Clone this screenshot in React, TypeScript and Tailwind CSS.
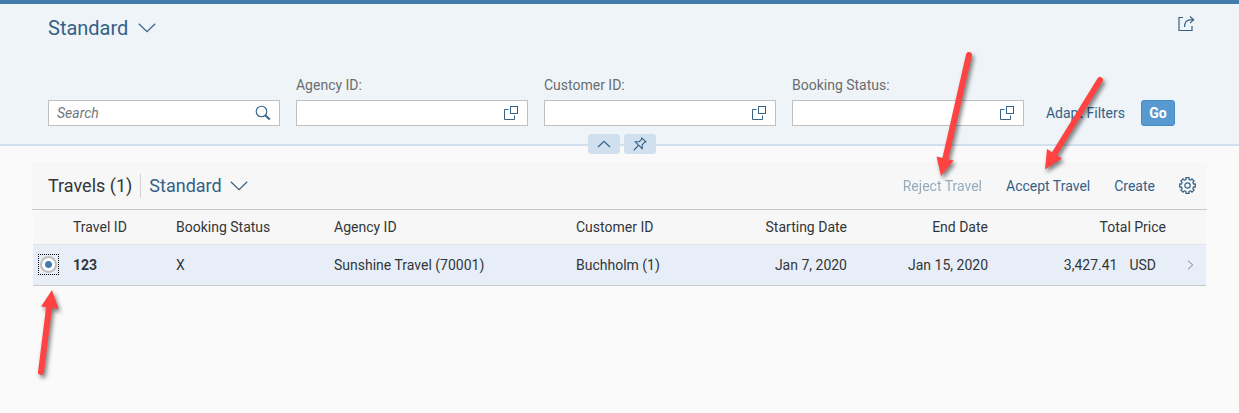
import React from "react";

function ChevronDown() {
  return (
    <svg width="18" height="10" viewBox="0 0 18 10" fill="none" stroke="#346187" strokeWidth="1.2" aria-hidden="true">
      <path d="M.8.8 9 8.7 17.2.8" />
    </svg>
  );
}

function ValueHelpIcon() {
  return (
    <svg width="16" height="16" viewBox="0 0 16 16" fill="none" stroke="#346187" aria-hidden="true">
      <path d="M5.5 4.5h-4v10h10v-4" />
      <rect x="7.5" y="1.5" width="7" height="7" />
    </svg>
  );
}

function SearchIcon() {
  return (
    <svg width="16" height="16" viewBox="0 0 16 16" fill="none" stroke="#346187" aria-hidden="true">
      <circle cx="6.5" cy="6.5" r="5.3" strokeWidth="1.1" />
      <path d="m10.2 10.2 4.6 4.3" strokeWidth="1.9" />
    </svg>
  );
}

function ShareIcon() {
  return (
    <svg width="18" height="16" viewBox="0 0 18 16" fill="none" stroke="#346187" strokeWidth="1.2" aria-hidden="true">
      <path d="M6 1.5H2v13h13v-4.500" />
      <path d="M7.5 11C7.500 6.500 9.800 3.800 13 3.800h3.600" />
      <path d="m13 .5 3.600 3.300L13 7.100" />
    </svg>
  );
}

function PinIcon() {
  return (
    <svg width="14" height="14" viewBox="0 0 14 14" fill="none" stroke="#346187" strokeWidth="1.1" strokeLinejoin="round" aria-hidden="true">
      <path d="M8.700.8 13 5l-1.500.3-2.400 2.600.2 4L2 4.700l4.200.1 2.300-2.500z" />
      <path d="M5.300 8.500.7 13.300" />
    </svg>
  );
}

function GearIcon() {
  const teeth = 8;
  const points: string[] = [];
  for (let i = 0; i < teeth; i++) {
    const parts: [number, number][] = [[-0.24, 6.2], [-0.21, 8], [0.21, 8], [0.24, 6.2]];
    parts.forEach(([offset, radius]) => {
      const angle = (i / teeth) * Math.PI * 2 + offset;
      points.push(`${(8.5 + Math.sin(angle) * radius).toFixed(2)},${(8.5 - Math.cos(angle) * radius).toFixed(2)}`);
    });
  }
  return (
    <svg width="17" height="17" viewBox="0 0 17 17" fill="none" stroke="#346187" strokeWidth="1.2" strokeLinejoin="round" aria-hidden="true">
      <polygon points={points.join(" ")} />
      <circle cx="8.5" cy="8.5" r="2.7" />
    </svg>
  );
}

function FilterField({ id, label }: { id: string; label: string }) {
  return (
    <div className="min-w-0 flex-1">
      <label htmlFor={id} className="mb-[5px] block h-5 whitespace-nowrap leading-5 text-[#6a6d70]">
        {label}
      </label>
      <div className="flex h-[26px] items-center border border-[#bfbfbf] bg-white pr-2">
        <input id={id} type="text" className="h-full min-w-0 flex-1 bg-transparent px-2 outline-none" />
        <button type="button" aria-label={`Select ${label}`}>
          <ValueHelpIcon />
        </button>
      </div>
    </div>
  );
}

function Arrows() {
  return (
    <svg
      width="1120"
      height="400"
      viewBox="0 0 1120 400"
      className="pointer-events-none absolute left-0 top-0 drop-shadow-[2px_3px_2px_rgba(0,0,0,0.5)]"
      fill="#ff4343"
      stroke="#ff4343"
      aria-hidden="true"
    >
      <g strokeWidth="6" strokeLinecap="round">
        <path d="M969 55 945.5 158" />
        <path d="M1100 80 1055 153" />
        <path d="M41 372 49 308" />
      </g>
      <g stroke="none">
        <path d="M941 176 936.5 156.5 953.5 160.5z" />
        <path d="M1045 169.5 1047 149 1062 158.5z" />
        <path d="M52 290 41 306.5 58.5 309z" />
      </g>
    </svg>
  );
}

export default function App() {
  return (
    <div className="relative min-h-screen bg-[#fafafa] font-[Roboto,'Liberation_Sans',sans-serif] text-sm text-[#32363a]">
      <header className="relative border-b-2 border-t-4 border-b-[#d1e0ee] border-t-[#427cac] bg-[#eff4f8] pb-[18px] pl-12 pr-16">
        <div className="-mr-5 flex items-start justify-between pt-3">
          <button type="button" className="flex items-center gap-2.5 text-xl leading-6 text-[#346187]">
            Standard
            <ChevronDown />
          </button>
          <button type="button" aria-label="Share">
            <ShareIcon />
          </button>
        </div>

        <div className="flex items-end gap-4 pt-[35px]">
          <div className="min-w-0 flex-1">
            <div className="flex h-[26px] items-center border border-[#bfbfbf] bg-white pr-2">
              <input
                type="search"
                aria-label="Search"
                placeholder="Search"
                className="h-full min-w-0 flex-1 bg-transparent px-2 outline-none placeholder:italic placeholder:text-[#74777a]"
              />
              <button type="button" aria-label="Start search">
                <SearchIcon />
              </button>
            </div>
          </div>
          <FilterField id="agency" label="Agency ID:" />
          <FilterField id="customer" label="Customer ID:" />
          <FilterField id="status" label="Booking Status:" />
          <div className="flex h-[26px] items-center gap-4 pl-1.5">
            <button type="button" className="whitespace-nowrap text-[#346187]">
              Adapt Filters
            </button>
            <button type="button" className="h-[26px] w-[34px] rounded-[3px] border border-[#428ac8] bg-[#5899cf] font-bold text-white">
              Go
            </button>
          </div>
        </div>

        <div className="absolute inset-x-0 -bottom-2.5 flex justify-center gap-1 pl-[5px]">
          <button type="button" aria-label="Collapse header" className="flex h-5 w-8 items-center justify-center rounded-[3px] bg-[#d1e0ee]">
            <svg width="14" height="8" viewBox="0 0 14 8" fill="none" stroke="#346187" strokeWidth="1.2" aria-hidden="true">
              <path d="M1 7 7 1.300 13 7" />
            </svg>
          </button>
          <button type="button" aria-label="Pin header" className="flex h-5 w-8 items-center justify-center rounded-[3px] bg-[#d1e0ee]">
            <PinIcon />
          </button>
        </div>
      </header>

      <main className="px-8 pt-4">
        <div className="flex h-12 items-center border-b border-[#c8c9ca] bg-[#f7f7f7] pl-4 pr-[11px]">
          <h1 className="border-r border-[#d3d3d3] pr-2 text-lg leading-6">Travels (1)</h1>
          <button type="button" className="flex items-center gap-2 pl-2 text-lg leading-6 text-[#346187]">
            Standard
            <ChevronDown />
          </button>
          <div className="ml-auto flex items-center gap-6 text-[#346187]">
            <button type="button" disabled className="opacity-50">
              Reject Travel
            </button>
            <button type="button">Accept Travel</button>
            <button type="button">Create</button>
            <button type="button" aria-label="Settings">
              <GearIcon />
            </button>
          </div>
        </div>

        <div className="px-px">
          <table className="w-full table-fixed border-collapse text-left">
            <colgroup>
              <col className="w-8" />
              <col className="w-[103px]" />
              <col className="w-[158px]" />
              <col className="w-[242px]" />
              <col className="w-[142px]" />
              <col className="w-[145px]" />
              <col className="w-[141px]" />
              <col className="w-[178px]" />
              <col className="w-8" />
            </colgroup>
            <thead>
              <tr className="h-[34px] border-b border-[#e4e4e4] bg-[#f7f7f7]">
                <th aria-label="Selection" />
                <th className="px-2 font-normal">Travel ID</th>
                <th className="px-2 font-normal">Booking Status</th>
                <th className="px-2 font-normal">Agency ID</th>
                <th className="px-2 font-normal">Customer ID</th>
                <th className="px-2 text-right font-normal">Starting Date</th>
                <th className="px-2 text-right font-normal">End Date</th>
                <th className="px-2 text-right font-normal">Total Price</th>
                <th aria-label="Details" />
              </tr>
            </thead>
            <tbody>
              <tr className="h-[41px] border-b border-[#c8c9ca] bg-[#e7eef7]">
                <td>
                  <label className="ml-[5px] flex size-[21px] items-center justify-center border border-dotted border-black">
                    <input
                      type="radio"
                      name="travel"
                      aria-label="Select travel 123"
                      defaultChecked
                      className="size-[17px] appearance-none rounded-full border-2 border-[#bfbfbf] bg-white checked:bg-[radial-gradient(circle,#427cac_3px,#fff_4px)]"
                    />
                  </label>
                </td>
                <td className="px-2 font-bold">123</td>
                <td className="px-2">X</td>
                <td className="px-2">Sunshine Travel (70001)</td>
                <td className="px-2">Buchholm (1)</td>
                <td className="px-2 text-right">Jan 7, 2020</td>
                <td className="px-2 text-right">Jan 15, 2020</td>
                <td className="px-2">
                  <div className="flex justify-end gap-3 pr-2.5">
                    <span>3,427.41</span>
                    <span>USD</span>
                  </div>
                </td>
                <td>
                  <svg width="7" height="10" viewBox="0 0 7 10" fill="none" stroke="#808386" className="mx-auto" aria-hidden="true">
                    <path d="M1 .7 5.7 5 1 9.3" />
                  </svg>
                </td>
              </tr>
            </tbody>
          </table>
        </div>
      </main>
      <Arrows />
    </div>
  );
}
